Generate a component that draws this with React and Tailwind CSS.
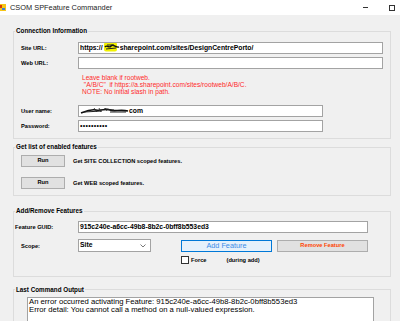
import React from 'react';

const Scribble = () => (
    <svg width="17" height="10" viewBox="0 0 17 10" className="inline-block align-middle -mt-[2px]">
        <rect x="1" y="0.5" width="13" height="9" rx="2" fill="#f2f200" />
        <path d="M2 5 C4 2, 6 7, 8 4 S12 6, 16 5" stroke="#111" strokeWidth="1.4" fill="none" />
        <path d="M4 3 L11 3 M3 7 L13 6" stroke="#222" strokeWidth="1" fill="none" />
    </svg>
);

const UserScribble = () => (
    <svg width="49" height="8" viewBox="0 0 49 8" className="inline-block align-middle -mt-[1px]">
        <path d="M1 6 C6 4, 10 2, 16 3 S26 1, 30 3 S40 2, 48 4" stroke="#111" strokeWidth="1.6" fill="none" />
        <path d="M4 5 L22 4 M24 2 L34 3 M30 5 L46 5" stroke="#222" strokeWidth="1.2" fill="none" />
        <path d="M14 1 L17 5 M19 1 L21 5 M25 1 L27 4" stroke="#222" strokeWidth="0.8" fill="none" />
    </svg>
);

const Group = ({ title, className = '', children }) => (
    <fieldset className={`border border-[#dcdcdc] w-[378px] ${className}`}>
        <legend className="ml-[1px] px-[1px] text-[6.3px] font-bold leading-[8px]">{title}</legend>
        {children}
    </fieldset>
);

const TextBox = ({ width, children }) => (
    <div className={`h-[12px] bg-white border border-[#a3a3a3] pl-[1px] flex items-center text-[6.8px] font-bold whitespace-nowrap overflow-hidden ${width}`}>
        {children}
    </div>
);

const Row = ({ label, labelClass = 'ml-[7px] w-[57px]', children, className = '' }) => (
    <div className={`flex items-center ${className}`}>
        <span className={`text-[5.7px] font-bold leading-[8px] shrink-0 ${labelClass}`}>{label}</span>
        {children}
    </div>
);

const RunButton = () => (
    <button className="w-[44px] h-[12px] bg-[#e1e1e1] border border-[#adadad] text-[5.7px] font-bold leading-none flex items-center justify-center">
        Run
    </button>
);

export default function App() {
    return (
        <div className="w-[400px] h-[321px] overflow-hidden bg-[#f0f0f0] text-black font-['Liberation_Sans',Arial,sans-serif]">
            {/* Title bar */}
            <div className="h-[15px] bg-white flex items-center">
                <svg width="8" height="9" viewBox="0 0 8 9" className="-ml-[2px]">
                    <rect x="0" y="1" width="8" height="7" fill="#f5c518" />
                    <rect x="1" y="2" width="3" height="3" fill="#d83b01" />
                    <rect x="4" y="5" width="3" height="2" fill="#3c7ed6" />
                </svg>
                <span className="ml-[4px] text-[7.4px] leading-none text-[#222]">CSOM SPFeature Commander</span>
                <div className="ml-auto flex items-center">
                    <div className="w-[5px] h-px bg-[#333] mr-[21px]" />
                    <div className="w-[6px] h-[6px] border border-[#333] mr-[5px]" />
                </div>
            </div>

            <div className="pl-[13px] pt-[12px]">
                {/* Connection Information */}
                <Group title="Connection Information">
                    <div className="pt-[7px] pb-[6px]">
                        <Row label="Site URL:">
                            <TextBox width="w-[305px]">
                                <span>https://</span>
                                <Scribble />
                                <span>sharepoint.com/sites/DesignCentrePorto/</span>
                            </TextBox>
                        </Row>
                        <Row label="Web URL:" className="mt-[3px]">
                            <TextBox width="w-[305px]" />
                        </Row>
                        <div className="mt-[5px] ml-[68px] text-[6.6px] leading-[7px] text-[#ff2b2b] whitespace-pre">
                            <div>Leave blank if rootweb.</div>
                            <div> "A/B/C"  if https://a.sharepoint.com/sites/rootweb/A/B/C.</div>
                            <div>NOTE: No initial slash in path.</div>
                        </div>
                        <Row label="User name:" className="mt-[10px]">
                            <TextBox width="w-[245px]">
                                <UserScribble />
                                <span>com</span>
                            </TextBox>
                        </Row>
                        <Row label="Password:" className="mt-[3px]">
                            <TextBox width="w-[245px]">
                                <span className="text-[7px] font-normal tracking-[0.3px]">••••••••••</span>
                            </TextBox>
                        </Row>
                    </div>
                </Group>

                {/* Get list of enabled features */}
                <Group title="Get list of enabled features" className="mt-[4px]">
                    <div className="pt-[4px] pb-[6px] pl-[7px]">
                        <div className="flex items-center">
                            <RunButton />
                            <span className="ml-[8px] text-[5.7px] font-bold">Get SITE COLLECTION scoped features.</span>
                        </div>
                        <div className="flex items-center mt-[10px]">
                            <RunButton />
                            <span className="ml-[8px] text-[5.7px] font-bold">Get WEB scoped features.</span>
                        </div>
                    </div>
                </Group>

                {/* Add/Remove Features */}
                <Group title="Add/Remove Features" className="mt-[11px]">
                    <div className="pt-[6px] pb-[11px]">
                        <Row label="Feature GUID:" labelClass="ml-[1px] w-[63px]">
                            <TextBox width="w-[290px]">
                                <span>915c240e-a6cc-49b8-8b2c-0bff8b553ed3</span>
                            </TextBox>
                        </Row>
                        <Row label="Scope:" className="mt-[6px]">
                            <div className="w-[73px] h-[13px] bg-white border border-[#a3a3a3] pl-[1px] pr-[4px] flex items-center justify-between text-[6.8px] font-bold">
                                <span>Site</span>
                                <svg width="6" height="4" viewBox="0 0 6 4">
                                    <path d="M0.5 0.5 L3 3 L5.5 0.5" stroke="#555" strokeWidth="0.8" fill="none" />
                                </svg>
                            </div>
                            <button className="ml-[30px] w-[91px] h-[12px] bg-[#e5f1fb] border border-[#0078d7] text-[7.3px] leading-none text-[#3c8ce7] flex items-center justify-center">
                                Add Feature
                            </button>
                            <button className="ml-[5px] w-[91px] h-[12px] bg-[#e1e1e1] border border-[#adadad] text-[5.7px] font-bold leading-none text-[#ff4500] flex items-center justify-center">
                                Remove Feature
                            </button>
                        </Row>
                        <div className="flex items-center mt-[4px] ml-[167px] text-[5.7px] font-bold">
                            <span className="w-[8px] h-[8px] bg-white border border-[#333]" />
                            <span className="ml-[2px]">Force</span>
                            <span className="ml-[20px]">(during add)</span>
                        </div>
                    </div>
                </Group>

                {/* Last Command Output */}
                <Group title="Last Command Output" className="mt-[9px]">
                    <div className="pt-[3px] pl-[13px] pb-[4px]">
                        <div className="w-[347px] h-[40px] bg-white border border-[#a3a3a3] px-[1px] text-[7.7px] leading-[8px] whitespace-nowrap">
                            <div>An error occurred activating Feature: 915c240e-a6cc-49b8-8b2c-0bff8b553ed3</div>
                            <div>Error detail: You cannot call a method on a null-valued expression.</div>
                        </div>
                    </div>
                </Group>
            </div>
        </div>
    );
}
